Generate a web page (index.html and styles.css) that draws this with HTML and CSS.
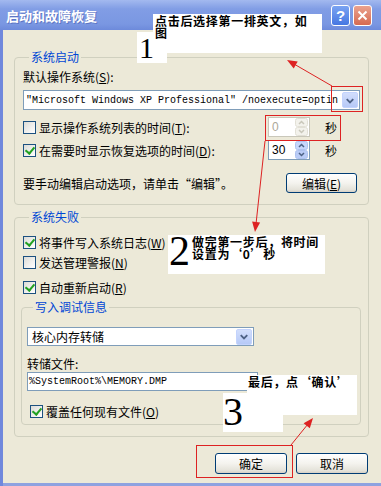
FILE: index.html
```html
<!DOCTYPE html>
<html lang="zh-CN">
<head>
    <meta charset="UTF-8">
    <meta name="viewport" content="width=device-width, initial-scale=1.0">
    <title>启动和故障恢复</title>
    <link rel="stylesheet" href="styles.css">
</head>
<body>
    <div class="window">
        <div class="titlebar">
            <span class="title">启动和故障恢复</span>
            <span class="tb-btn tb-help">?</span>
            <span class="tb-btn tb-close">
                <svg width="11" height="11" viewBox="0 0 11 11"><path d="M1.5 1.5 L9.5 9.5 M9.5 1.5 L1.5 9.5" stroke="#fff" stroke-width="2"/></svg>
            </span>
        </div>

        <div class="content">
            <fieldset class="group group-startup">
                <legend>系统启动</legend>
                <div class="line">默认操作系统(<u>S</u>):</div>
                <div class="combo combo-os">
                    <span class="combo-text mono">"Microsoft Windows XP Professional" /noexecute=optin</span>
                    <span class="drop-btn">
                        <svg width="15" height="15" viewBox="0 0 15 15"><path d="M4 6 L7.5 9.5 L11 6" stroke="#4d6185" stroke-width="2" fill="none"/></svg>
                    </span>
                </div>
                <div class="spin-row">
                    <span class="check"></span>
                    <span class="check-label">显示操作系统列表的时间(<u>T</u>):</span>
                    <span class="spinner disabled">
                        <span class="spin-field">0</span>
                        <svg width="13" height="18" viewBox="0 0 13 18">
                            <rect x="0.5" y="0.5" width="12" height="8" rx="2" fill="#f3f2ec" stroke="#e2e0d6"/>
                            <rect x="0.5" y="9.5" width="12" height="8" rx="2" fill="#f3f2ec" stroke="#e2e0d6"/>
                            <path d="M4 6 L6.5 3.5 L9 6 M4 12 L6.5 14.5 L9 12" stroke="#c9c7ba" stroke-width="1.5" fill="none"/>
                        </svg>
                    </span>
                    <span class="unit">秒</span>
                </div>
                <div class="spin-row spin-row-2">
                    <span class="check checked"></span>
                    <span class="check-label">在需要时显示恢复选项的时间(<u>D</u>):</span>
                    <span class="spinner">
                        <span class="spin-field">30</span>
                        <svg width="13" height="18" viewBox="0 0 13 18">
                            <rect x="0.5" y="0.5" width="12" height="8" rx="2" fill="#c6d6fb" stroke="#aec2ef"/>
                            <rect x="0.5" y="9.5" width="12" height="8" rx="2" fill="#b9cbf6" stroke="#aec2ef"/>
                            <path d="M4 6 L6.5 3.5 L9 6 M4 12 L6.5 14.5 L9 12" stroke="#4d6185" stroke-width="1.5" fill="none"/>
                        </svg>
                    </span>
                    <span class="unit">秒</span>
                </div>
                <div class="edit-row">
                    <span>要手动编辑启动选项，请单击“编辑”。</span>
                    <button class="btn btn-edit">编辑(<u>E</u>)</button>
                </div>
            </fieldset>

            <fieldset class="group group-failure">
                <legend>系统失败</legend>
                <div class="check-row">
                    <span class="check checked"></span>
                    <span class="check-label">将事件写入系统日志(<u>W</u>)</span>
                </div>
                <div class="check-row row-alert">
                    <span class="check"></span>
                    <span class="check-label">发送管理警报(<u>N</u>)</span>
                </div>
                <div class="check-row row-restart">
                    <span class="check checked"></span>
                    <span class="check-label">自动重新启动(<u>R</u>)</span>
                </div>

                <fieldset class="group group-debug">
                    <legend>写入调试信息</legend>
                    <div class="combo combo-dump">
                        <span class="combo-text">核心内存转储</span>
                        <span class="drop-btn">
                            <svg width="15" height="15" viewBox="0 0 15 15"><path d="M4 6 L7.5 9.5 L11 6" stroke="#4d6185" stroke-width="2" fill="none"/></svg>
                        </span>
                    </div>
                    <div class="line line-file">转储文件:</div>
                    <div class="textbox mono">%SystemRoot%\MEMORY.DMP</div>
                    <div class="check-row row-overwrite">
                        <span class="check checked"></span>
                        <span class="check-label">覆盖任何现有文件(<u>O</u>)</span>
                    </div>
                </fieldset>
            </fieldset>

            <div class="actions">
                <button class="btn">确定</button>
                <button class="btn">取消</button>
            </div>
        </div>

        <!-- annotations drawn over the dialog -->
        <div class="note-box n1a"></div>
        <div class="note-box n1b"></div>
        <div class="note-text t1">
            <div class="note-line">点击后选择第一排英文，如</div>
            <div class="note-line">图</div>
        </div>
        <div class="note-num num1">1</div>

        <div class="note-box n2"></div>
        <div class="note-text t2">
            <div class="note-line">做完第一步后，将时间</div>
            <div class="note-line">设置为‘0’秒</div>
        </div>
        <div class="note-num num2">2</div>

        <div class="note-box n3a"></div>
        <div class="note-box n3b"></div>
        <div class="note-text t3">最后，点‘确认’</div>
        <div class="note-num num3">3</div>

        <svg class="marks" width="381" height="486" viewBox="0 0 381 486">
            <g fill="none" stroke="#dd2222" stroke-width="1">
                <rect x="331.5" y="86.5" width="31" height="25"/>
                <rect x="265.5" y="115.5" width="75" height="25"/>
                <rect x="196.5" y="445.5" width="96" height="32"/>
                <line x1="332" y1="86" x2="294" y2="64"/>
                <line x1="265" y1="141" x2="256" y2="224"/>
                <line x1="291" y1="445" x2="308" y2="424"/>
            </g>
            <g fill="#dd2222">
                <polygon points="287,60 297.7,61.5 293.7,68.5"/>
                <polygon points="255,232 260.1,222.5 252.1,221.6"/>
                <polygon points="313,418 309.8,428.3 303.6,423.2"/>
            </g>
        </svg>
    </div>
</body>
</html>
```

FILE: styles.css
```css
* {
    box-sizing: border-box;
}

body {
    margin: 0;
    background: #ece9d8;
    font-family: "Noto Sans CJK SC", sans-serif;
    font-size: 12px;
    color: #000;
}

u {
    text-decoration: underline;
}

.window {
    position: relative;
    width: 381px;
    height: 486px;
    background: #ece9d8;
    box-shadow: inset 3px 0 0 #7088dc, inset 0 -3px 0 #8ea2e0;
    overflow: hidden;
}

/* title bar */
.titlebar {
    display: flex;
    align-items: center;
    gap: 3px;
    height: 30px;
    padding: 0 9px 0 6px;
    background: linear-gradient(#a3b9ef, #819de5 30%, #7a97e2 80%, #6d8adb);
}

.title {
    flex: 1;
    color: #fff;
    font-size: 13px;
    font-weight: bold;
    text-shadow: 1px 1px 0 #5d76c4;
}

.tb-btn {
    display: flex;
    align-items: center;
    justify-content: center;
    width: 19px;
    height: 21px;
    border: 1px solid #fff;
    border-radius: 3px;
    color: #fff;
    font-family: "Liberation Sans", sans-serif;
    font-weight: bold;
    font-size: 15px;
}

.tb-help {
    background: linear-gradient(#7aa3f2, #4677e2);
}

.tb-close {
    background: linear-gradient(#eba28e, #d56a52);
}

/* body */
.content {
    padding: 21px 12px 0 14px;
}

.group {
    margin: 0;
    padding: 8px 8px 11px;
    border: 1px solid #d0d0bf;
    border-radius: 4px;
    min-width: 0;
}

.group legend {
    margin-left: 6px;
    padding: 0 2px;
    color: #0046d5;
    line-height: 12px;
}

.line {
    line-height: 12px;
}

.mono {
    font-family: "Liberation Mono", monospace;
    font-size: 10px;
}

.combo {
    display: flex;
    align-items: center;
    border: 1px solid #7f9db9;
    background: #fff;
}

.combo-text {
    flex: 1;
    white-space: nowrap;
    overflow: hidden;
}

.combo-os {
    height: 20px;
    margin-top: 7px;
    padding: 0 1px 0 2px;
}

.combo-dump {
    width: 227px;
    height: 19px;
    padding: 0 1px 0 4px;
}

.drop-btn {
    display: flex;
    align-items: center;
    justify-content: center;
    width: 16px;
    height: 16px;
    border: 1px solid #c3d3fd;
    border-radius: 2px;
    background: linear-gradient(#d2defc, #b6c9f7);
}

/* checkboxes */
.check {
    position: relative;
    flex: none;
    width: 13px;
    height: 13px;
    border: 1px solid #1c5180;
    background: linear-gradient(135deg, #dcdcd7, #fff);
}

.check.checked::after {
    content: "";
    position: absolute;
    left: 3px;
    top: 0;
    width: 4px;
    height: 7px;
    border-right: 2px solid #21a121;
    border-bottom: 2px solid #21a121;
    transform: rotate(40deg);
}

.check-label {
    white-space: nowrap;
}

.spin-row,
.check-row {
    display: flex;
    align-items: center;
    gap: 3px;
}

.spin-row {
    height: 20px;
    margin-top: 7px;
}

.spin-row-2 {
    margin-top: 3px;
}

.spinner {
    display: flex;
    align-items: center;
    width: 42px;
    height: 20px;
    margin-left: auto;
    padding-right: 1px;
    border: 1px solid #7f9db9;
    background: #fff;
}

.spinner.disabled {
    border-color: #c9c7ba;
    color: #aca899;
}

.spin-field {
    flex: 1;
    padding-left: 3px;
    font-family: "Liberation Sans", sans-serif;
    font-size: 12px;
}

.unit {
    margin: 0 23px 0 12px;
}

.edit-row {
    display: flex;
    align-items: center;
    justify-content: space-between;
    height: 20px;
    margin-top: 13px;
}

.btn {
    width: 72px;
    height: 21px;
    padding: 0;
    border: 1px solid #003c74;
    border-radius: 3px;
    background: linear-gradient(#fff, #f4f3ee 50%, #e4e2d9 88%, #d6d0c5);
    font-family: inherit;
    font-size: 12px;
    color: #000;
}

.btn-edit {
    width: 71px;
    height: 20px;
    margin-right: 3px;
}

.group-failure {
    margin-top: 6px;
    padding-top: 11px;
}

.check-row {
    height: 16px;
}

.row-alert {
    margin-top: 4px;
}

.row-restart {
    margin-top: 9px;
}

.group-debug {
    margin: 6px -1px 0 -2px;
    padding: 14px 5px 5px;
}

.line-file {
    margin-top: 12px;
}

.textbox {
    width: 231px;
    height: 19px;
    margin-top: 2px;
    padding-left: 1px;
    border: 1px solid #7f9db9;
    background: #fff;
    line-height: 17px;
    white-space: nowrap;
}

.row-overwrite {
    margin-top: 12px;
    padding-left: 3px;
}

.actions {
    display: flex;
    justify-content: flex-end;
    gap: 9px;
    margin: 16px 1px 0 0;
}

/* annotations */
.note-box {
    position: absolute;
    background: #fff;
}

.n1a { left: 153px; top: 14px; width: 169px; height: 39px; }
.n1b { left: 137px; top: 32px; width: 30px; height: 31px; }
.n2 { left: 168px; top: 235px; width: 157px; height: 39px; }
.n3a { left: 247px; top: 375px; width: 110px; height: 40px; }
.n3b { left: 223px; top: 393px; width: 60px; height: 39px; }

.note-text {
    position: absolute;
    font-size: 12px;
    font-weight: bold;
    line-height: 12px;
    letter-spacing: 0.7px;
    white-space: nowrap;
}

.note-line {
    height: 12px;
}

.t1 { left: 155px; top: 15px; }
.t2 { left: 192px; top: 236px; }
.t3 { left: 248px; top: 376px; }

.note-num {
    position: absolute;
    font-family: "Liberation Serif", serif;
    line-height: 1;
}

.num1 { left: 139px; top: 33px; font-size: 30px; }
.num2 { left: 169px; top: 230px; font-size: 42px; }
.num3 { left: 223px; top: 392px; font-size: 40px; }

.marks {
    position: absolute;
    left: 0;
    top: 0;
    pointer-events: none;
}
```
